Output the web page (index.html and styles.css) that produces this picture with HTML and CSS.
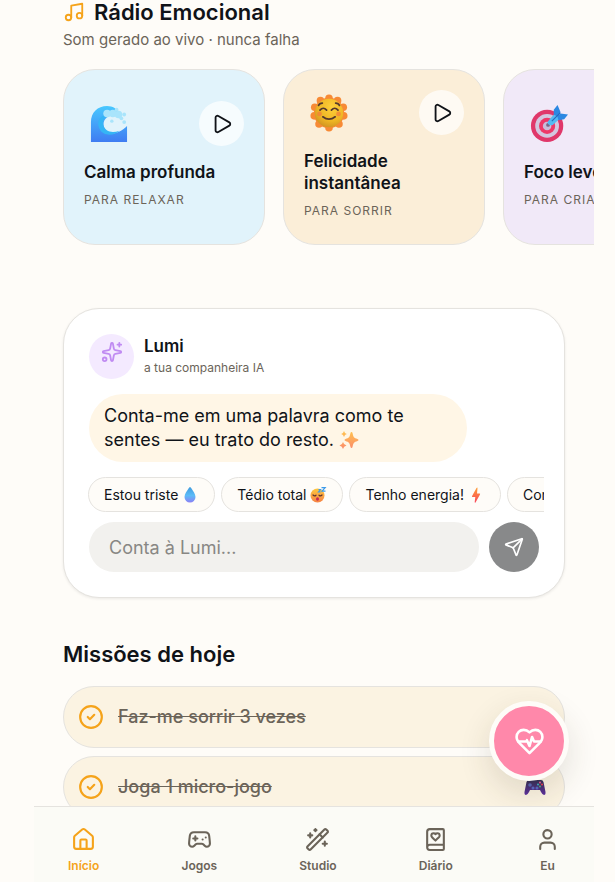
FILE: index.html
```html
<!DOCTYPE html>
<html lang="pt">
<head>
<meta charset="utf-8">
<meta name="viewport" content="width=device-width, initial-scale=1">
<title>Rádio Emocional</title>
<link rel="stylesheet" href="styles.css">
</head>
<body>
<main class="page">
  <section class="radio">
    <h2 class="heading">
      <svg class="icon heading-icon" viewBox="0 0 24 24" aria-hidden="true"><path d="M9 18V5l12-2v13"/><circle cx="6" cy="18" r="3"/><circle cx="18" cy="16" r="3"/></svg>
      Rádio Emocional
    </h2>
    <p class="subtitle">Som gerado ao vivo · nunca falha</p>
    <div class="stations">
      <article class="station station-calm">
        <div class="station-top">
          <svg class="station-emoji" viewBox="0 0 40 40" aria-hidden="true">
            <defs><linearGradient id="wave" x1="0" y1="0" x2="0" y2="1"><stop offset="0" stop-color="#48c8ff"/><stop offset="1" stop-color="#3f7cf2"/></linearGradient></defs>
            <path fill="url(#wave)" d="M1 39V18C1 8 8 1 18 1c6 0 10 3 12 6l-8 4c-7 2-9 8-7 13 3 8 14 8 24-2v17z"/>
            <path fill="#35b5f5" d="M17 10c-8 2-10 9-7 15 4 8 15 8 21 2-8 3-15 1-17-6-1-5 1-8 5-11z"/>
            <g fill="#a9e4fb"><circle cx="18" cy="9" r="4"/><circle cx="24" cy="9" r="4"/><circle cx="30" cy="10" r="4"/><circle cx="23" cy="17" r="1.8"/><circle cx="36" cy="10" r="2"/><circle cx="36" cy="18" r="2"/><circle cx="33" cy="14" r="2"/><circle cx="28" cy="5" r="2"/></g>
          </svg>
          <button class="play" type="button" aria-label="Tocar Calma profunda"><svg class="icon" viewBox="0 0 24 24"><path d="M5 5a2 2 0 0 1 3.008-1.728l11.997 6.998a2 2 0 0 1 .003 3.458l-12 7A2 2 0 0 1 5 19z"/></svg></button>
        </div>
        <h3 class="station-name">Calma profunda</h3>
        <p class="station-tag">Para relaxar</p>
      </article>
      <article class="station station-joy">
        <div class="station-top">
          <svg class="station-emoji" viewBox="0 0 40 40" aria-hidden="true">
            <defs><radialGradient id="sun" cx=".6" cy=".3" r=".8"><stop offset="0" stop-color="#ffd03a"/><stop offset=".6" stop-color="#eeb524"/><stop offset="1" stop-color="#c98a22"/></radialGradient></defs>
            <g fill="#f78a35"><circle cx="20" cy="20" r="16"/><circle cx="20" cy="4.500" r="4"/><circle cx="29" cy="7" r="4"/><circle cx="35" cy="14" r="4"/><circle cx="35.500" cy="23" r="4"/><circle cx="30.500" cy="31.500" r="4"/><circle cx="20" cy="35.500" r="4"/><circle cx="9.500" cy="31.500" r="4"/><circle cx="4.500" cy="23" r="4"/><circle cx="5" cy="14" r="4"/><circle cx="11" cy="7" r="4"/></g>
            <circle cx="20" cy="20" r="15" fill="url(#sun)"/>
            <circle cx="10" cy="21" r="2.500" fill="#f47b3a" opacity=".7"/><circle cx="30" cy="21" r="2.500" fill="#f47b3a" opacity=".7"/>
            <g fill="none" stroke="#54382d" stroke-width="1.800" stroke-linecap="round"><path d="M10.500 17q3.500-4 7 0M22.500 17q3.500-4 7 0M13.500 24q6.500 5 13 0M9 12q1-2.500 4-2.500M27 9.500q3 0 4 2.500"/></g>
          </svg>
          <button class="play" type="button" aria-label="Tocar Felicidade instantânea"><svg class="icon" viewBox="0 0 24 24"><path d="M5 5a2 2 0 0 1 3.008-1.728l11.997 6.998a2 2 0 0 1 .003 3.458l-12 7A2 2 0 0 1 5 19z"/></svg></button>
        </div>
        <h3 class="station-name">Felicidade instantânea</h3>
        <p class="station-tag">Para sorrir</p>
      </article>
      <article class="station station-focus">
        <div class="station-top">
          <svg class="station-emoji" viewBox="0 0 40 40" aria-hidden="true">
            <circle cx="18" cy="22" r="17" fill="#e0376a"/><circle cx="18" cy="22" r="12.500" fill="#d3c6df"/><circle cx="18" cy="22" r="8.500" fill="#ee3868"/><circle cx="18" cy="22" r="4.500" fill="#c9bdd9"/><circle cx="19" cy="21" r="2" fill="#7a6685"/>
            <path fill="#53baf2" d="M19 17l8-9 6 5-9 8q-3 1-5-1-1-2 0-3z"/><path fill="#2c88e2" d="M25 10V5l4-5 3 7-2 6zM29 13l3-4 8 1-4 5-6 1z"/><path stroke="#2669bb" stroke-width="1.200" d="M23 17l9-9"/>
          </svg>
          <button class="play" type="button" aria-label="Tocar Foco leve"><svg class="icon" viewBox="0 0 24 24"><path d="M5 5a2 2 0 0 1 3.008-1.728l11.997 6.998a2 2 0 0 1 .003 3.458l-12 7A2 2 0 0 1 5 19z"/></svg></button>
        </div>
        <h3 class="station-name">Foco leve</h3>
        <p class="station-tag">Para criar</p>
      </article>
    </div>
  </section>

  <section class="chat">
    <header class="chat-header">
      <span class="avatar"><svg class="icon" viewBox="0 0 24 24" aria-hidden="true"><path d="M11.017 2.814a1 1 0 0 1 1.966 0l1.051 5.558a2 2 0 0 0 1.594 1.594l5.558 1.051a1 1 0 0 1 0 1.966l-5.558 1.051a2 2 0 0 0-1.594 1.594l-1.051 5.558a1 1 0 0 1-1.966 0l-1.051-5.558a2 2 0 0 0-1.594-1.594l-5.558-1.051a1 1 0 0 1 0-1.966l5.558-1.051a2 2 0 0 0 1.594-1.594z"/><path d="M20 2v4M22 4h-4"/><circle cx="4" cy="20" r="2"/></svg></span>
      <div>
        <h3 class="chat-name">Lumi</h3>
        <p class="chat-role">a tua companheira IA</p>
      </div>
    </header>
    <p class="bubble">Conta-me em uma palavra como te sentes — eu trato do resto. <svg class="bubble-emoji" viewBox="0 0 20 20" aria-hidden="true"><defs><linearGradient id="spark" x1="0" y1="0" x2="0" y2="1"><stop offset="0" stop-color="#ffc34e"/><stop offset="1" stop-color="#fb8b6b"/></linearGradient></defs><path fill="url(#spark)" d="M12.500 2q.8 0 1 1c.8 4 1.500 5 5 6q1 .3 1 1t-1 1c-3.500 1-4.200 2-5 6q-.2 1-1 1t-1-1c-.8-4-1.500-5-5-6q-1-.3-1-1t1-1c3.500-1 4.200-2 5-6q.2-1 1-1zM5 1q.6 2.500 2.800 3Q5.600 4.600 5 7 4.400 4.600 2.200 4 4.400 3.500 5 1zM4 12q.7 3 3.500 3.500Q4.700 16.200 4 19 3.300 16.200.5 15.500 3.300 15 4 12z"/></svg></p>
    <div class="chips">
      <button class="chip" type="button">Estou triste <svg class="chip-emoji" viewBox="0 0 18 18" aria-hidden="true"><defs><linearGradient id="drop" x1="0" y1="0" x2="0" y2="1"><stop offset="0" stop-color="#3f9bdd"/><stop offset=".55" stop-color="#5cbcf8"/><stop offset="1" stop-color="#8b80f5"/></linearGradient></defs><path fill="url(#drop)" d="M9 1q.7 0 1.500 1.500C12 5 14.500 8 14.500 11a5.500 5.500 0 0 1-11 0C3.500 8 6 5 7.500 2.500Q8.300 1 9 1z"/></svg></button>
      <button class="chip" type="button">Tédio total <svg class="chip-emoji" viewBox="0 0 18 18" aria-hidden="true"><defs><linearGradient id="face" x1="0" y1="0" x2="0" y2="1"><stop offset="0" stop-color="#ffc83d"/><stop offset="1" stop-color="#f68345"/></linearGradient></defs><circle cx="8.500" cy="9.500" r="7" fill="url(#face)"/><path fill="none" stroke="#5d3430" stroke-width="1.200" stroke-linecap="round" d="M4 9q1.500 1.600 3 .2M10 9.200q1.500 1.400 3-.2"/><ellipse cx="8.500" cy="13" rx="1.500" ry="1.700" fill="#c32957"/><path fill="none" stroke="#3d9bea" stroke-width="1.200" d="M12.500 1.600h3.700L13 5.200h3.500M9.500 3.500h2L9.500 6h2"/></svg></button>
      <button class="chip" type="button">Tenho energia! <svg class="chip-emoji" viewBox="0 0 18 18" aria-hidden="true"><defs><linearGradient id="bolt" x1="0" y1="0" x2="0" y2="1"><stop offset="0" stop-color="#ff9f35"/><stop offset="1" stop-color="#f8455c"/></linearGradient></defs><path fill="url(#bolt)" d="M9.500 2q1-1 1 .3L10 7.500h2.500q1 .2.500 1l-4.500 8q-.8.600-.8-.4L8.300 11H5.500q-1-.2-.4-1z"/></svg></button>
      <button class="chip" type="button">Conta-me algo</button>
    </div>
    <form class="composer">
      <input class="composer-input" type="text" aria-label="Mensagem para Lumi" placeholder="Conta à Lumi...">
      <button class="send" type="button" aria-label="Enviar"><svg class="icon" viewBox="0 0 24 24"><path d="M14.536 21.686a.5.5 0 0 0 .937-.024l6.500-19a.496.496 0 0 0-.635-.635l-19 6.500a.5.5 0 0 0-.024.937l7.930 3.180a2 2 0 0 1 1.112 1.110z"/><path d="m21.854 2.147-10.940 10.939"/></svg></button>
    </form>
  </section>

  <section class="missions">
    <h2 class="heading">Missões de hoje</h2>
    <ul class="mission-list">
      <li class="mission">
        <svg class="icon mission-check" viewBox="0 0 24 24" aria-hidden="true"><circle cx="12" cy="12" r="10"/><path d="m9 12 2 2 4-4"/></svg>
        <span class="mission-text">Faz-me sorrir 3 vezes</span>
      </li>
      <li class="mission">
        <svg class="icon mission-check" viewBox="0 0 24 24" aria-hidden="true"><circle cx="12" cy="12" r="10"/><path d="m9 12 2 2 4-4"/></svg>
        <span class="mission-text">Joga 1 micro-jogo</span>
        <svg class="mission-emoji" viewBox="0 0 22 22" aria-hidden="true"><defs><linearGradient id="pad" x1="0" y1="0" x2="0" y2="1"><stop offset="0" stop-color="#343054"/><stop offset="1" stop-color="#5e2fa0"/></linearGradient></defs><path fill="url(#pad)" d="M5 4h12q2 0 2.500 2l2 10q.3 3-1.500 3-1.500 0-3-3l-1-2H6l-1 2q-1.500 3-3 3-1.800 0-1.500-3l2-10Q3 4 5 4z"/><circle cx="6" cy="9" r="1.800" fill="#5966b5"/><circle cx="9" cy="12" r="1.500" fill="#596ac4"/><circle cx="13" cy="12" r="1.500" fill="#596ac4"/><circle cx="16" cy="6.500" r="1" fill="#ef5b94"/><circle cx="18" cy="8.500" r="1" fill="#f3434d"/><circle cx="14" cy="8.500" r="1" fill="#3bb7c3"/><circle cx="16" cy="10.500" r="1" fill="#4ab678"/></svg>
      </li>
    </ul>
  </section>
</main>

<button class="sos" type="button" aria-label="Apoio"><svg class="icon" viewBox="0 0 24 24"><path d="M19 14c1.490-1.460 3-3.210 3-5.500A5.500 5.500 0 0 0 16.500 3c-1.760 0-3 .5-4.500 2-1.500-1.500-2.740-2-4.500-2A5.500 5.500 0 0 0 2 8.500c0 2.300 1.500 4.050 3 5.500l7 7Z"/><path d="M3.220 12H9.500l.5-1 2 4.500 2-7 1.500 3.500h5.270"/></svg></button>

<nav class="tabs" aria-label="Principal">
  <a class="tab tab-active" href="#inicio"><svg class="icon" viewBox="0 0 24 24" aria-hidden="true"><path d="M15 21v-8a1 1 0 0 0-1-1h-4a1 1 0 0 0-1 1v8"/><path d="M3 10a2 2 0 0 1 .709-1.528l7-6a2 2 0 0 1 2.582 0l7 6A2 2 0 0 1 21 10v9a2 2 0 0 1-2 2H5a2 2 0 0 1-2-2z"/></svg>Início</a>
  <a class="tab" href="#jogos"><svg class="icon" viewBox="0 0 24 24" aria-hidden="true"><path d="M6 11h4M8 9v4M15 12h.01M18 10h.01"/><path d="M17.320 5H6.680a4 4 0 0 0-3.978 3.590c-.006.052-.010.101-.017.152C2.604 9.416 2 14.456 2 16a3 3 0 0 0 3 3c1 0 1.500-.5 2-1l1.414-1.414A2 2 0 0 1 9.828 16h4.344a2 2 0 0 1 1.414.586L17 18c.5.5 1 1 2 1a3 3 0 0 0 3-3c0-1.545-.604-6.584-.685-7.258-.007-.050-.011-.100-.017-.151A4 4 0 0 0 17.320 5z"/></svg>Jogos</a>
  <a class="tab" href="#studio"><svg class="icon" viewBox="0 0 24 24" aria-hidden="true"><path d="m21.640 3.640-1.280-1.280a1.210 1.210 0 0 0-1.720 0L2.360 18.640a1.210 1.210 0 0 0 0 1.720l1.280 1.280a1.200 1.200 0 0 0 1.720 0L21.640 5.360a1.200 1.200 0 0 0 0-1.720"/><path d="m14 7 3 3M5 6v4M19 14v4M10 2v2M7 8H3M21 16h-4M11 3H9"/></svg>Studio</a>
  <a class="tab" href="#diario"><svg class="icon" viewBox="0 0 24 24" aria-hidden="true"><path d="M16 8.200A2.220 2.220 0 0 0 13.800 6c-.8 0-1.400.3-1.800.9-.4-.6-1-.9-1.800-.9A2.220 2.220 0 0 0 8 8.200c0 .6.3 1.200.7 1.600A226.652 226.652 0 0 0 12 13a404 404 0 0 0 3.300-3.100 2.413 2.413 0 0 0 .7-1.700"/><path d="M4 19.500v-15A2.500 2.500 0 0 1 6.500 2H19a1 1 0 0 1 1 1v18a1 1 0 0 1-1 1H6.500a1 1 0 0 1 0-5H20"/></svg>Diário</a>
  <a class="tab" href="#eu"><svg class="icon" viewBox="0 0 24 24" aria-hidden="true"><path d="M19 21v-2a4 4 0 0 0-4-4H9a4 4 0 0 0-4 4v2"/><circle cx="12" cy="7" r="4"/></svg>Eu</a>
</nav>
</body>
</html>
```
FILE: styles.css
```css
:root {
  --bg: #fefcf8;
  --ink: #101318;
  --muted: #6b6459;
  --line: #e5e3df;
  --accent: #f5a31a;
  --side-left: 34px;
  --side-right: 21px;
}

* { box-sizing: border-box; }

body {
  margin: 0;
  background: var(--bg);
  color: var(--ink);
  font-family: Inter, "Liberation Sans", sans-serif;
  font-size: 18px;
  line-height: 24px;
}

h2, h3, p, ul { margin: 0; padding: 0; }

button, input { font: inherit; color: inherit; }

button { cursor: pointer; }

.icon {
  display: block;
  flex: none;
  width: 22px;
  height: 22px;
  fill: none;
  stroke: currentColor;
  stroke-width: 2;
  stroke-linecap: round;
  stroke-linejoin: round;
}

.page {
  margin: 0 var(--side-right) 0 var(--side-left);
  padding: 0 29px 64px;
}

.heading {
  display: flex;
  align-items: center;
  gap: 9px;
  font-size: 22px;
  font-weight: 600;
  line-height: 24px;
}

.heading-icon { color: var(--accent); }

.subtitle {
  margin-top: 4px;
  color: var(--muted);
  font-size: 15px;
}

.stations {
  display: flex;
  gap: 18px;
  margin: 17px -29px 0 0;
  overflow-x: auto;
  scrollbar-width: none;
}

.station {
  display: flex;
  flex: none;
  flex-direction: column;
  justify-content: center;
  width: 202px;
  min-height: 176px;
  padding: 20px 20px 23px;
  border: 1px solid var(--line);
  border-radius: 32px;
}

.station-calm { background: #e1f3fb; }
.station-joy { background: #fbeed8; }
.station-focus { background: #f1e9f8; }

.station-top {
  display: flex;
  align-items: center;
  justify-content: space-between;
}

.station-emoji {
  width: 38px;
  height: 38px;
  margin-left: 6px;
}

.play {
  display: grid;
  place-items: center;
  width: 45px;
  height: 45px;
  padding: 0;
  border: 0;
  border-radius: 50%;
  background: rgb(255 255 255 / 70%);
}

.play .icon { width: 22px; height: 22px; }

.station-name {
  margin-top: 15px;
  font-size: 17px;
  font-weight: 600;
  line-height: 22px;
}

.station-tag {
  margin-top: 7px;
  color: var(--muted);
  font-size: 12px;
  line-height: 20px;
  letter-spacing: 1px;
  text-transform: uppercase;
}

.chat {
  margin-top: 63px;
  padding: 25px;
  border: 1px solid var(--line);
  border-radius: 36px;
  background: #fff;
  box-shadow: 0 1px 3px rgb(0 0 0 / 8%);
}

.chat-header {
  display: flex;
  gap: 10px;
}

.avatar {
  display: flex;
  justify-content: center;
  width: 45px;
  height: 45px;
  padding-top: 7px;
  border-radius: 50%;
  background: #f4eaff;
  color: #c08bf2;
}

.chat-name {
  font-size: 17px;
  font-weight: 600;
}

.chat-role {
  color: var(--muted);
  font-size: 12px;
  line-height: 20px;
}

.bubble {
  max-width: 84%;
  margin-top: 15px;
  padding: 10px 15px;
  border-radius: 34px;
  background: #fff6e6;
}

.bubble-emoji {
  width: 20px;
  height: 20px;
  vertical-align: -4px;
}

.chips {
  display: flex;
  gap: 6px;
  margin: 15px -5px 0;
  padding: 0 4px;
  overflow-x: auto;
  scrollbar-width: none;
}

.chip {
  display: flex;
  flex: none;
  align-items: center;
  gap: 3px;
  height: 35px;
  padding: 0 15px;
  border: 1px solid var(--line);
  border-radius: 18px;
  background: #fefcf8;
  font-size: 14px;
}

.chip-emoji { width: 18px; height: 18px; }

.composer {
  display: flex;
  gap: 10px;
  margin-top: 10px;
}

.composer-input {
  flex: 1;
  min-width: 0;
  height: 50px;
  padding: 0 20px;
  border: 0;
  border-radius: 25px;
  background: #f2f1ee;
}

.composer-input::placeholder { color: #888784; opacity: 1; }

.send {
  display: grid;
  place-items: center;
  width: 50px;
  height: 50px;
  padding: 0;
  border: 0;
  border-radius: 50%;
  background: #88898a;
  color: #fff;
}

.send .icon { width: 20px; height: 20px; }

.missions { margin-top: 44px; }

.mission-list {
  display: grid;
  gap: 8px;
  margin-top: 20px;
  list-style: none;
}

.mission {
  display: flex;
  align-items: center;
  gap: 14px;
  height: 62px;
  padding: 0 18px 0 14px;
  border: 1px solid var(--line);
  border-radius: 31px;
  background: #fbf3e2;
}

.mission-check {
  width: 26px;
  height: 26px;
  color: var(--accent);
}

.mission-text {
  flex: 1;
  color: var(--muted);
  font-weight: 500;
  text-decoration: line-through;
}

.mission-emoji { width: 22px; height: 22px; }

.sos {
  position: fixed;
  right: 46px;
  bottom: 101px;
  display: grid;
  place-items: center;
  width: 80px;
  height: 80px;
  padding: 0;
  border: 5px solid var(--bg);
  border-radius: 50%;
  background: #ff88aa;
  color: #fff;
  box-shadow: 0 12px 32px rgb(60 50 30 / 14%);
}

.sos .icon { width: 31px; height: 31px; }

.tabs {
  position: fixed;
  right: var(--side-right);
  bottom: 0;
  left: var(--side-left);
  display: flex;
  justify-content: space-between;
  height: 76px;
  padding: 20px 34px 0;
  border-top: 1px solid var(--line);
  background: #fbfbf6;
}

.tab {
  display: flex;
  flex-direction: column;
  align-items: center;
  gap: 5px;
  color: var(--muted);
  font-size: 12px;
  font-weight: 600;
  line-height: 18px;
  text-decoration: none;
}

.tab .icon { width: 25px; height: 25px; }

.tab-active { color: var(--accent); }
```
